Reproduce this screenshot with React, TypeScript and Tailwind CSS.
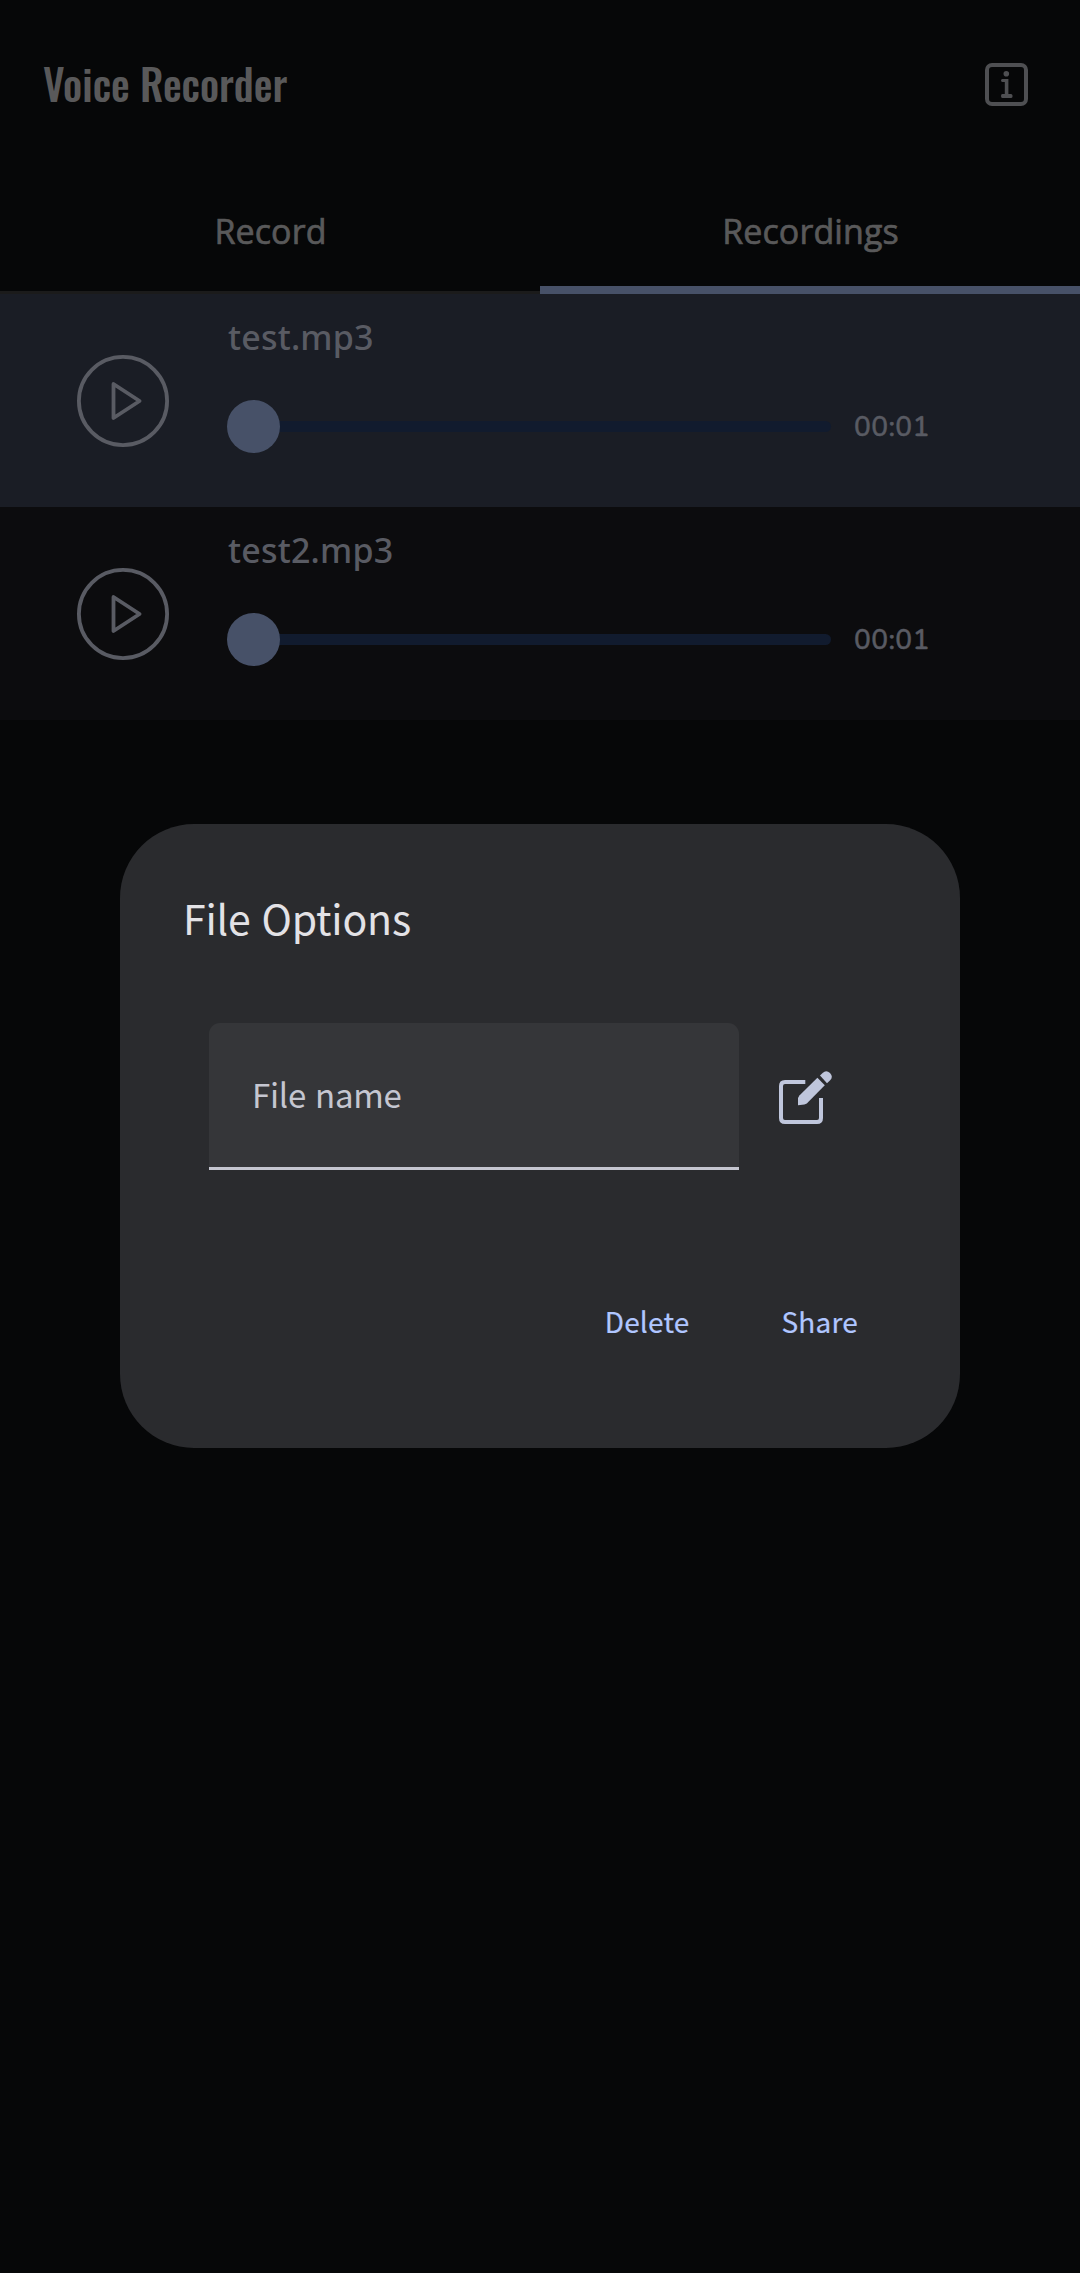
type Recording = { name: string; duration: string; selected: boolean };

const recordings: Recording[] = [
  { name: "test.mp3", duration: "00:01", selected: true },
  { name: "test2.mp3", duration: "00:01", selected: false },
];

function InfoIcon() {
  return (
    <svg width="43" height="43" viewBox="0 0 43 43" fill="none" className="text-[#4e4f52]">
      <rect x="2" y="2" width="39" height="39" rx="5" stroke="currentColor" strokeWidth="4" />
      <circle cx="21.3" cy="10.8" r="2.8" fill="currentColor" />
      <path
        d="M17.3 16H23.4V31H26.2Q27.6 31.6 27.6 33Q27.6 35 26.2 35H17.3Q16 35 16 33Q16 31.2 17.3 31H19.8V19H17.3Q16 18.8 16 17.5Q16 16.2 17.3 16Z"
        fill="currentColor"
      />
    </svg>
  );
}

function PlayIcon() {
  return (
    <svg width="92" height="92" viewBox="0 0 92 92" fill="none" className="shrink-0 text-[#595b63]">
      <circle cx="46" cy="46" r="44.1" stroke="currentColor" strokeWidth="3.8" />
      <path
        d="M36.5 29L62.6 46L36.5 63Z"
        stroke="currentColor"
        strokeWidth="3.8"
        strokeLinejoin="round"
      />
    </svg>
  );
}

function EditIcon() {
  return (
    <svg width="54" height="54" viewBox="0 0 54 54" fill="none" className="text-[#bfc6dc]">
      <path
        d="M26.3 11H6Q2 11 2 15V47Q2 51 6 51H38Q42 51 42 47V27"
        stroke="currentColor"
        strokeWidth="4"
      />
      <path d="M19 34.2V27L20.4 24.6L38.4 6.8L45.8 14.2L27.8 32.4L25.4 33.6L19 34.2Z" fill="currentColor" />
      <path
        d="M41 4.6L43.6 2Q47.2 -1.4 51 2Q54.4 5.6 51.4 9L48 12.2Z"
        fill="currentColor"
      />
    </svg>
  );
}

function Tab({ label, active }: { label: string; active: boolean }) {
  return (
    <button
      className={
        active
          ? "h-full w-1/2 border-b-8 border-[#475168] pt-[7px] pl-px"
          : "h-full w-1/2 border-b-[3px] border-[#1b1b1b] pt-[2px] pl-px"
      }
    >
      <span className="text-[34px] leading-[48px] tracking-[0.1px] [-webkit-text-stroke:0.7px_#59595a]">
        {label}
      </span>
    </button>
  );
}

function Slider() {
  return (
    <div className="flex w-[604px] items-center">
      <div className="z-10 size-[53px] shrink-0 rounded-full bg-[#475168]" />
      <div className="-ml-1 h-[11px] flex-1 rounded-r-full bg-[#111b2e]" />
    </div>
  );
}

function RecordingRow({ name, duration, selected }: Recording) {
  return (
    <div
      className={
        selected
          ? "flex h-[213px] gap-[58px] bg-[#1a1d25] pl-[77px]"
          : "flex h-[213px] gap-[58px] bg-[#0c0c0e] pl-[77px]"
      }
    >
      <div className="flex items-center">
        <PlayIcon />
      </div>
      <div className="flex flex-col pt-[19px] text-[#595b63]">
        <div className="pl-px font-['Noto_Sans',sans-serif] text-[34px] leading-[48px] font-medium tracking-[0.2px]">
          {name}
        </div>
        <div className="mt-[39px] flex items-center gap-[23px]">
          <Slider />
          <span className="pt-[2px] font-[Nunito,'Open_Sans',sans-serif] text-[28px] leading-[51px] font-medium tracking-[0.4px] [-webkit-text-stroke:0.5px_#595b63]">
            {duration}
          </span>
        </div>
      </div>
    </div>
  );
}

function FileOptionsDialog() {
  return (
    <div className="absolute top-[824px] left-[120px] h-[624px] w-[840px] rounded-[74px] bg-[#2a2b2e] pt-[63px] font-['Noto_Sans_CJK_SC',sans-serif]">
      <h2 className="pl-[63px] text-[41px] leading-[60px] tracking-[-0.2px] [word-spacing:2px] text-[#e3e2e6]">
        File Options
      </h2>
      <div className="mt-[76px] flex pl-[89px]">
        <div className="flex h-[147px] w-[530px] items-center rounded-t-[11px] border-b-[3px] border-[#c5c6d0] bg-[#353639] pb-[3px] pl-[43px]">
          <span className="text-[33px] leading-[48px] tracking-[-0.25px] [word-spacing:2px] text-[#c5c6d0]">
            File name
          </span>
        </div>
        <button className="mt-12 -mb-px ml-10 h-[54px]">
          <EditIcon />
        </button>
      </div>
      <div className="mt-[131px] flex justify-end gap-[92px] pr-[102px] text-[28px] leading-[40px] tracking-[0.2px] text-[#b0c6ff] [-webkit-text-stroke:0.2px_#b0c6ff]">
        <button>Delete</button>
        <button>Share</button>
      </div>
    </div>
  );
}

export default function App() {
  return (
    <div className="relative h-[2273px] w-[1080px] overflow-hidden bg-[#060708] font-['Open_Sans','Noto_Sans',sans-serif] text-[#59595a]">
      <header className="flex h-[169px] items-center justify-between pr-[52px] pl-[43px]">
        <h1 className="pb-[3px] font-[Oswald,'Roboto_Condensed',sans-serif] text-[42px] leading-[60px] font-medium">
          Voice Recorder
        </h1>
        <InfoIcon />
      </header>
      <nav className="flex h-[125px]">
        <Tab label="Record" active={false} />
        <Tab label="Recordings" active />
      </nav>
      <main>
        {recordings.map((recording) => (
          <RecordingRow key={recording.name} {...recording} />
        ))}
      </main>
      <FileOptionsDialog />
    </div>
  );
}
